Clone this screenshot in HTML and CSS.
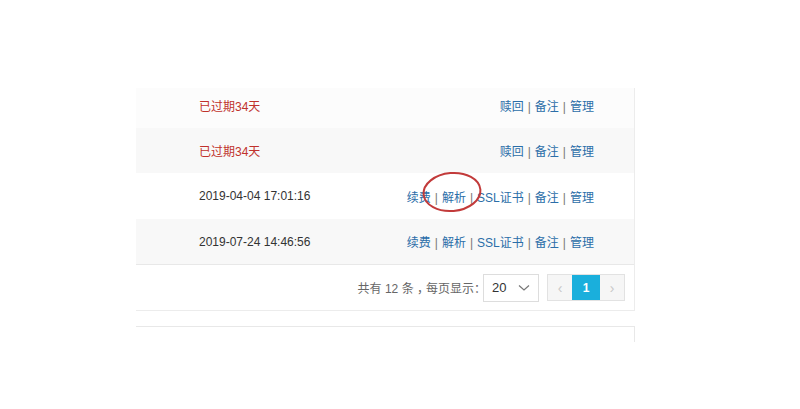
FILE: index.html
```html
<!DOCTYPE html>
<html lang="zh-CN">
<head>
  <meta charset="UTF-8" />
  <title>域名列表</title>
  <link rel="stylesheet" href="styles.css">
</head>
<body>

  <div class="panel">
    <!-- Domain rows -->
    <div class="list">
      <div class="row row-first odd">
        <div class="status expired">已过期34天</div>
        <div class="actions">
          <a href="#">赎回</a><span class="sep">|</span><a href="#">备注</a><span class="sep">|</span><a href="#">管理</a>
        </div>
      </div>
      <div class="row even">
        <div class="status expired">已过期34天</div>
        <div class="actions">
          <a href="#">赎回</a><span class="sep">|</span><a href="#">备注</a><span class="sep">|</span><a href="#">管理</a>
        </div>
      </div>
      <div class="row">
        <div class="status">2019-04-04 17:01:16</div>
        <div class="actions">
          <a href="#">续费</a><span class="sep">|</span><a href="#" class="marked">解析</a><span class="sep">|</span><a href="#">SSL证书</a><span class="sep">|</span><a href="#">备注</a><span class="sep">|</span><a href="#">管理</a>
        </div>
      </div>
      <div class="row even">
        <div class="status">2019-07-24 14:46:56</div>
        <div class="actions">
          <a href="#">续费</a><span class="sep">|</span><a href="#">解析</a><span class="sep">|</span><a href="#">SSL证书</a><span class="sep">|</span><a href="#">备注</a><span class="sep">|</span><a href="#">管理</a>
        </div>
      </div>
    </div>

    <!-- Pagination -->
    <div class="pager-bar">
      <span class="total">共有 12 条 <span class="comma">，</span>每页显示：</span>
      <div class="page-size">
        <span>20</span>
        <svg width="12" height="8" viewBox="0 0 12 8"><path d="M1 1.5 L6 6 L11 1.5" fill="none" stroke="#777" stroke-width="1.2"/></svg>
      </div>
      <div class="pager">
        <span class="page-btn disabled">&lsaquo;</span>
        <span class="page-btn active">1</span>
        <span class="page-btn disabled">&rsaquo;</span>
      </div>
    </div>
  </div>

  <div class="panel-next"></div>

  <!-- hand drawn mark -->
  <svg class="mark" width="64" height="44" viewBox="0 0 64 44">
    <ellipse cx="32" cy="22" rx="28.5" ry="19" transform="rotate(-5 32 22)" fill="none" stroke="#c23a3a" stroke-width="2"/>
  </svg>

</body>
</html>
```

FILE: styles.css
```css
* {
  box-sizing: border-box;
  margin: 0;
  padding: 0;
}
body {
  background-color: #fff;
  font-family: "Liberation Sans", "Noto Sans CJK SC", sans-serif;
  font-size: 12px;
  color: #333;
  position: relative;
  width: 800px;
  height: 409px;
  overflow: hidden;
}
a {
  color: #2b6ea8;
  text-decoration: none;
}
.panel {
  margin: 88px 0 0 136px;
  width: 499px;
  border-right: 1px solid #ececec;
}
.row {
  display: flex;
  align-items: center;
  justify-content: space-between;
  height: 46px;
  padding: 0 40px 0 63px;
}
.row-first {
  height: 40px;
  padding-bottom: 6px;
}
.odd {
  background-color: #fcfcfc;
}
.even {
  background-color: #f8f8f8;
  height: 45px;
}
.row:last-child {
  height: 46px;
  border-bottom: 1px solid #e8e8e8;
}
.expired {
  color: #c0322c;
}
.sep {
  margin: 0 4px;
  color: #777;
}
.pager-bar {
  display: flex;
  align-items: center;
  justify-content: flex-end;
  height: 46px;
  padding-right: 9px;
  border-bottom: 1px solid #ececec;
}
.total {
  color: #666;
  margin-right: 3px;
  font-feature-settings: "halt";
}
.comma {
  margin-right: 3px;
}
.page-size {
  display: flex;
  align-items: center;
  justify-content: space-between;
  width: 56px;
  height: 28px;
  padding: 0 8px 0 8px;
  border: 1px solid #ddd;
  font-size: 13px;
  color: #333;
  margin-right: 8px;
}
.pager {
  display: flex;
  height: 27px;
  border: 1px solid #e2e2e2;
}
.page-btn {
  display: flex;
  align-items: center;
  justify-content: center;
  width: 24px;
  font-size: 14px;
}
.page-btn.disabled {
  background-color: #f6f6f6;
  color: #c8c8c8;
}
.page-btn.active {
  width: 28px;
  background-color: #1aafdc;
  color: #fff;
  font-weight: bold;
  font-size: 12px;
}
.panel-next {
  margin: 15px 0 0 136px;
  width: 499px;
  height: 16px;
  border-top: 1px solid #e8e8e8;
  border-right: 1px solid #e8e8e8;
}
.mark {
  position: absolute;
  left: 420px;
  top: 170px;
}
```
